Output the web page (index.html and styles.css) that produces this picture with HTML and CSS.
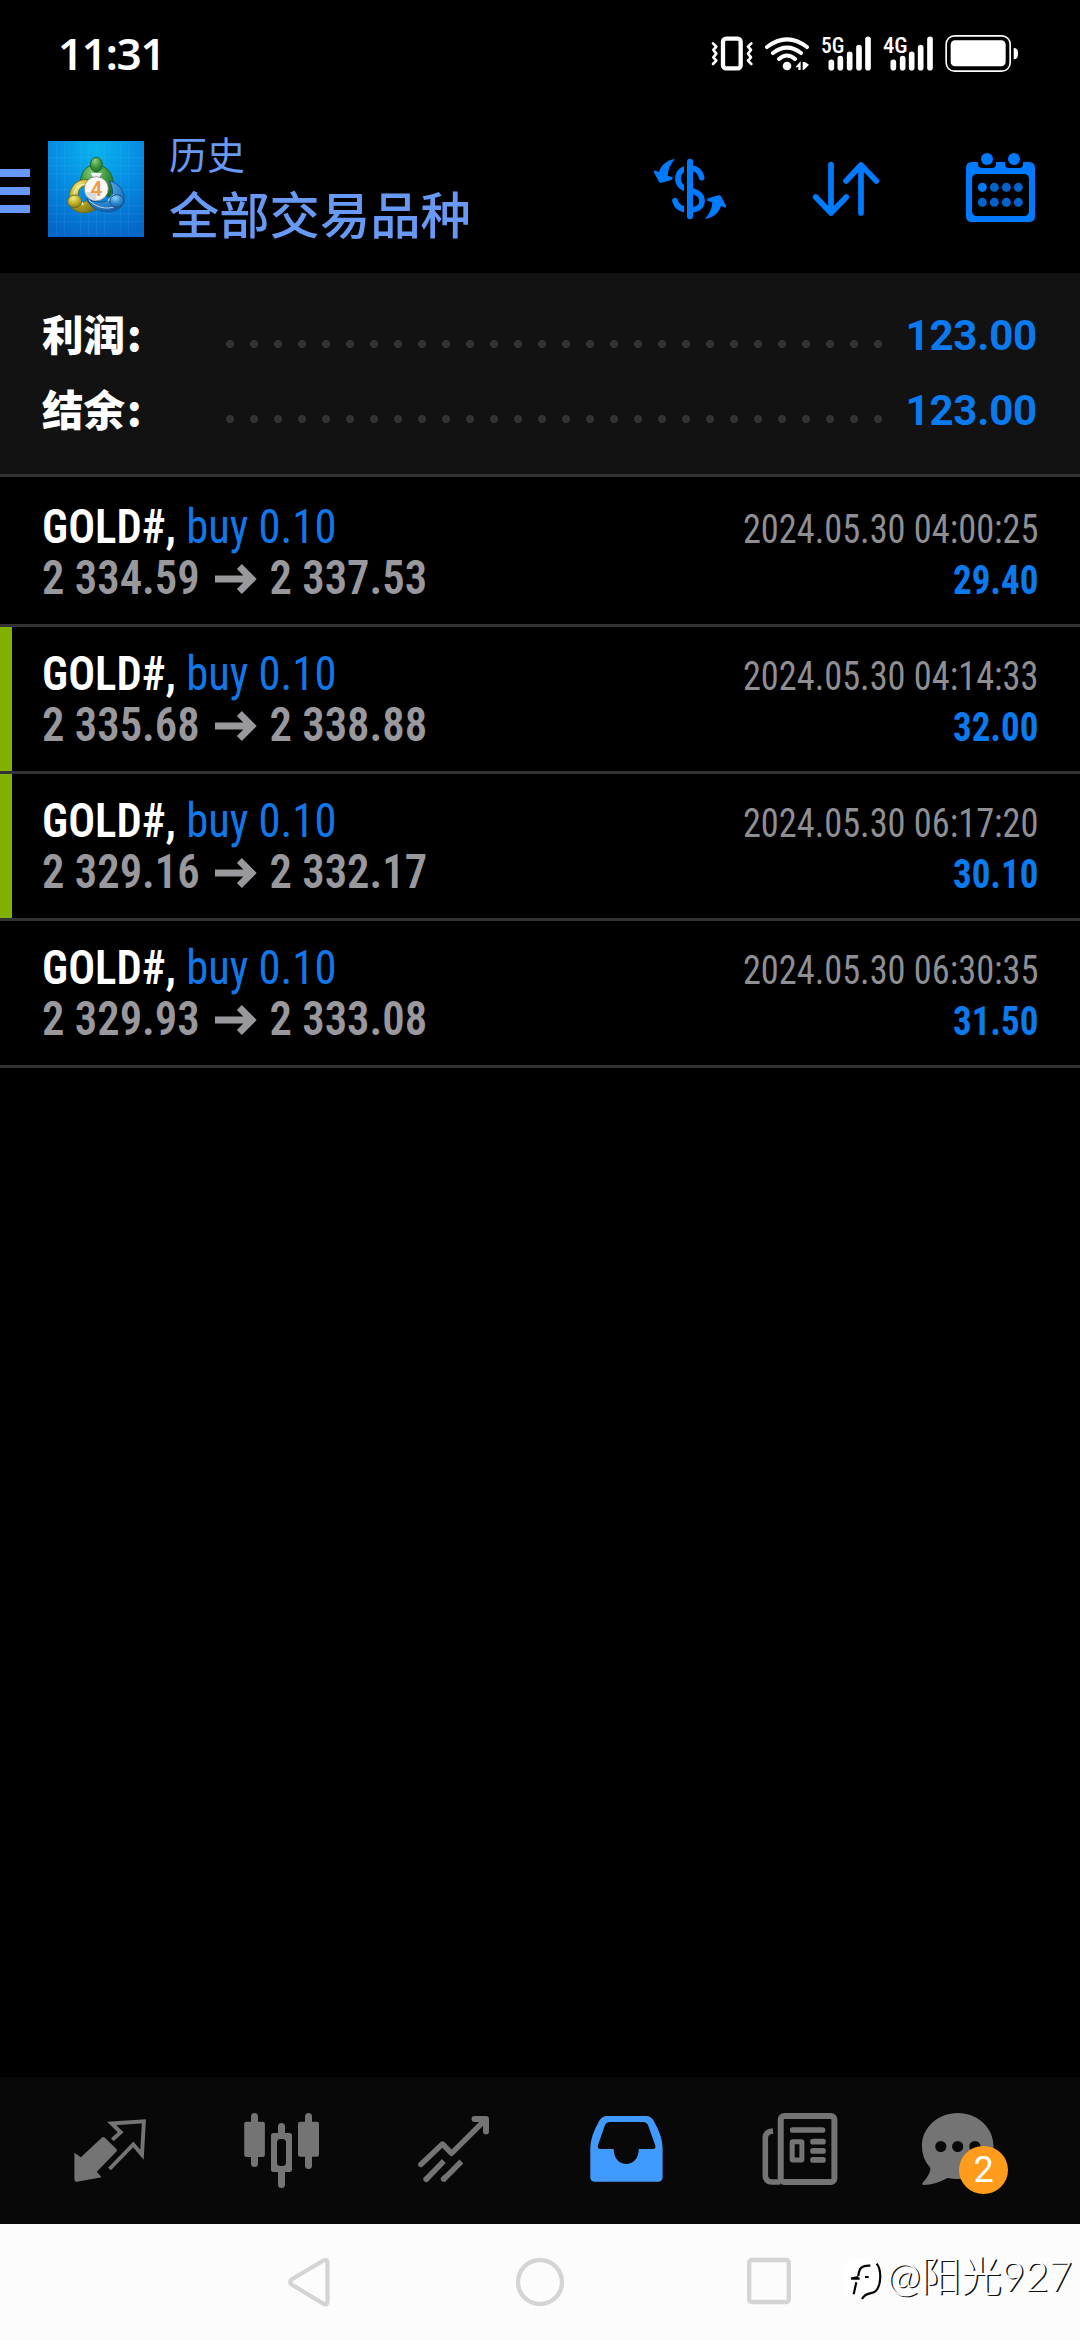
FILE: index.html
```
<!DOCTYPE html>
<html lang="zh-CN">
<head>
<meta charset="utf-8">
<title>历史</title>
<link rel="stylesheet" href="styles.css">
</head>
<body>
<div class="screen">
  <div class="status">
    <span class="clock">11:31</span>
    <svg class="status-icons" viewBox="90 60 930 140">
      <g fill="none" stroke="#fff" stroke-linecap="round" stroke-linejoin="round">
        <rect x="129" y="86" width="53" height="89" rx="9" stroke-width="13"/>
        <path d="M99 100l10 10-9 10 9 11-9 11 9 10-10 10M214 100l-10 10 9 10-9 11 9 11-9 10 10 10" stroke-width="8"/>
        <path d="M261 111Q321 65 381 111M279 129Q321 97 363 129M297 147Q321 126 345 147" stroke-width="12"/>
        <path d="M454 157v16M481 146v27M509 133v40M537 113v60M564 88v85M640 157v16M668 146v27M695 133v40M722 113v60M750 88v85" stroke-width="17"/>
        <rect x="798.500" y="77.500" width="192" height="106" rx="25" stroke-width="5"/>
      </g>
      <g fill="#fff">
        <circle cx="321" cy="168" r="13"/>
        <path d="M346 172l16-18v26h-7v-8zM368 156h7l12 8-13 14-6 3z"/>
        <rect x="812" y="91" width="165" height="78" rx="13"/>
        <path d="M1001 114c8 0 13 5 13 17s-5 17-13 17z"/>
        <text class="net" x="423" y="129" textLength="70" lengthAdjust="spacingAndGlyphs">5G</text>
        <text class="net" x="609" y="129" textLength="74" lengthAdjust="spacingAndGlyphs">4G</text>
      </g>
    </svg>
  </div>

  <header class="appbar">
    <div class="menu"><i></i><i></i><i></i></div>
    <svg class="logo" viewBox="0 0 288 288">
      <defs>
        <radialGradient id="sky" cx=".5" cy=".08" r=".95"><stop offset="0" stop-color="#08b4ee"/><stop offset=".45" stop-color="#0690e4"/><stop offset="1" stop-color="#0466c8"/></radialGradient>
        <radialGradient id="green" cx=".4" cy=".25" r=".8"><stop offset="0" stop-color="#8fce84"/><stop offset=".5" stop-color="#3f9a3c"/><stop offset="1" stop-color="#1c6a2b"/></radialGradient>
        <radialGradient id="gold" cx=".4" cy=".25" r=".8"><stop offset="0" stop-color="#f4ec86"/><stop offset=".5" stop-color="#c6b52b"/><stop offset="1" stop-color="#7f7715"/></radialGradient>
        <radialGradient id="blue" cx=".4" cy=".25" r=".8"><stop offset="0" stop-color="#90d2f7"/><stop offset=".5" stop-color="#3590d4"/><stop offset="1" stop-color="#115da6"/></radialGradient>
      </defs>
      <rect width="288" height="288" fill="url(#sky)"/>
      <path d="M26 0v288M50 0v288M98 0v288M122 0v288M146 0v288M170 0v288M218 0v288M242 0v288M0 50h288M0 74h288M0 98h288M0 146h288M0 194h288M0 218h288M0 242h288" stroke="#6cc6f5" stroke-opacity=".2" stroke-width="2"/>
      <g stroke-width="3">
        <path d="M144 70C112 72 94 98 97 136C108 120 117 116 126 116L144 98L160 112C168 124 170 140 164 160L184 168C204 138 202 78 144 70Z" fill="url(#green)" stroke="#1a6630"/>
        <path d="M118 116C80 112 56 150 66 190C76 218 116 222 140 206L116 180L98 186L90 166C90 144 98 134 118 134Z" fill="url(#gold)" stroke="#736d18"/>
        <path d="M184 120C214 124 236 156 226 188C212 216 160 222 130 194L116 174C140 184 166 188 180 176L194 162C194 144 192 134 184 120Z" fill="url(#blue)" stroke="#17528e"/>
        <path d="M122 176C140 198 176 208 202 196M112 130C92 130 78 144 78 164" fill="none" stroke="#f4fbff" stroke-opacity=".7"/>
        <path d="M128 96h34l-9 15h-17zM92 162l16 30-20-4zM198 158l-20 20 20 8z" fill="#e9f3f3"/>
        <ellipse cx="145" cy="71" rx="18" ry="22" fill="url(#green)" stroke="#1a6630"/>
        <ellipse cx="80" cy="181" rx="21" ry="19" fill="url(#gold)" stroke="#736d18"/>
        <ellipse cx="206" cy="180" rx="21" ry="19" fill="url(#blue)" stroke="#17528e"/>
      </g>
      <circle cx="145" cy="143" r="36" fill="#faf9f6" stroke="#777" stroke-width="2"/>
      <path d="M110 153h35v26a36 36 0 0 1-35-26z" fill="#d9d9d6"/>
      <text class="logo-num" x="145" y="165" text-anchor="middle">4</text>
    </svg>
    <div class="titles">
      <div class="title-small">历史</div>
      <div class="title-large">全部交易品种</div>
    </div>
    <div class="actions">
      <svg viewBox="90 60 240 240">
        <path d="M245 143C240 122 226 114 210 114C188 114 174 126 174 146C174 168 190 175 211 181C234 187 246 195 246 212C246 231 230 240 210 240C186 240 170 231 165 212" fill="none" stroke="#007aff" stroke-width="17" stroke-linecap="round"/>
        <path d="M196.500 85v185" stroke="#000" stroke-width="9"/>
        <path d="M210 95v164" stroke="#007aff" stroke-width="18" stroke-linecap="round"/>
        <g fill="#007aff"><path id="swing" d="M165 87C143 90 124 103 117 126L103 121C101 123 102 128 105 133L117 155C119 158 121 159 125 158L151 151C157 149 160 145 158 142L143 137C144 119 151 102 165 87Z"/><use href="#swing" transform="rotate(180 210 177)"/></g>
      </svg>
      <svg viewBox="555 60 240 240"><path d="M633 104v145M587 201l46 48 46-48M723 249V105M678 153l45-48 46 48" fill="none" stroke="#007aff" stroke-width="17" stroke-linecap="round" stroke-linejoin="round"/></svg>
      <svg viewBox="1020 60 240 240">
        <path fill="#007aff" fill-rule="evenodd" d="M1056 96h18v6q0 12 12 12h30q12 0 12-12v-6h27v6q0 12 12 12h30q12 0 12-12v-6h18q18 0 18 18v144q0 18-18 18h-171q-18 0-18-18v-144q0-18 18-18zM1072 132q-16 0-16 16v94q0 16 16 16h139q16 0 16-16v-94q0-16-16-16z"/>
        <g fill="#007aff"><circle cx="1101" cy="87" r="18"/><circle cx="1182" cy="87" r="18"/><circle cx="1087" cy="172" r="13.500"/></g>
        <g fill="#0463cb"><circle cx="1123" cy="172" r="13.500"/><circle cx="1159" cy="172" r="13.500"/><circle cx="1195" cy="172" r="13.500"/><circle cx="1087" cy="217" r="13.500"/><circle cx="1123" cy="217" r="13.500"/><circle cx="1159" cy="217" r="13.500"/><circle cx="1195" cy="217" r="13.500"/></g>
      </svg>
    </div>
  </header>

  <section class="summary">
    <div class="sum-row"><b class="sum-label">利润<span>:</span></b><i class="dots"></i><span class="sum-value">123.00</span></div>
    <div class="sum-row"><b class="sum-label">结余<span>:</span></b><i class="dots"></i><span class="sum-value">123.00</span></div>
  </section>

  <main class="deals">
    <article class="deal">
      <div class="line"><div class="lead"><span class="symbol">GOLD#,</span><span class="side">buy 0.10</span></div><time>2024.05.30 04:00:25</time></div>
      <div class="line"><div class="lead price">2 334.59<svg class="to" viewBox="0 0 43 30" preserveAspectRatio="none"><path d="M0 15h37M24.500 2.500l12.500 12.500-12.500 12.500"/></svg>2 337.53</div><span class="profit">29.40</span></div>
    </article>
    <article class="deal marked">
      <div class="line"><div class="lead"><span class="symbol">GOLD#,</span><span class="side">buy 0.10</span></div><time>2024.05.30 04:14:33</time></div>
      <div class="line"><div class="lead price">2 335.68<svg class="to" viewBox="0 0 43 30" preserveAspectRatio="none"><path d="M0 15h37M24.500 2.500l12.500 12.500-12.500 12.500"/></svg>2 338.88</div><span class="profit">32.00</span></div>
    </article>
    <article class="deal marked">
      <div class="line"><div class="lead"><span class="symbol">GOLD#,</span><span class="side">buy 0.10</span></div><time>2024.05.30 06:17:20</time></div>
      <div class="line"><div class="lead price">2 329.16<svg class="to" viewBox="0 0 43 30" preserveAspectRatio="none"><path d="M0 15h37M24.500 2.500l12.500 12.500-12.500 12.500"/></svg>2 332.17</div><span class="profit">30.10</span></div>
    </article>
    <article class="deal">
      <div class="line"><div class="lead"><span class="symbol">GOLD#,</span><span class="side">buy 0.10</span></div><time>2024.05.30 06:30:35</time></div>
      <div class="line"><div class="lead price">2 329.93<svg class="to" viewBox="0 0 43 30" preserveAspectRatio="none"><path d="M0 15h37M24.500 2.500l12.500 12.500-12.500 12.500"/></svg>2 333.08</div><span class="profit">31.50</span></div>
    </article>
  </main>

  <nav class="tabs">
    <svg viewBox="0 0 172 147"><path fill="#747474" d="M50.400 75.700L56.900 80.300L78 60.500Q79.300 59.300 80.600 60.500L92.400 72Q93.600 73.300 92.400 74.600L72.800 94.700L77.600 100.300L53 104.700Q50.400 105 50.400 102.500Z"/><path fill="none" stroke="#747474" stroke-width="3.900" d="M88.300 62.700L96.700 55.300L87.500 46.500L119.900 44.300L118 77.700L109.300 67.500L85.500 92"/></svg>
    <svg viewBox="0 0 172 147"><g fill="#747474"><rect x="48.200" y="44.700" width="20.700" height="35.300" rx="2"/><rect x="55" y="36" width="7" height="54" rx="3.500"/><rect x="102" y="44.700" width="21" height="35" rx="2"/><rect x="109" y="36" width="7" height="56" rx="3.500"/><path d="M82 56V49.500a3.500 3.500 0 0 1 7 0V56h4.500q2.500 0 2.500 2.500v34q0 2.500-2.500 2.500H89v12.500a3.500 3.500 0 0 1-7 0V95h-4.500q-2.500 0-2.500-2.500v-34q0-2.500 2.500-2.500zM84.500 62q-3.500 0-3.500 3.500v20q0 3.500 3.500 3.500h2q3.500 0 3.500-3.500v-20q0-3.500-3.500-3.500z" fill-rule="evenodd"/></g></svg>
    <svg viewBox="0 0 172 147"><g fill="none" stroke="#747474" stroke-width="5.400" stroke-linejoin="round"><path d="M52.800 87.500L74.500 67L83.500 76.300L117 43" stroke-linecap="round"/><path d="M106.500 42H118v12.500" stroke-width="6" stroke-linecap="round"/><path d="M75.900 84L57.500 103M93.400 84.500L75 103"/><path d="M60 100.500L58 102.300M77 100.500L75.500 102" stroke-linecap="round"/></g></svg>
    <svg viewBox="0 0 172 147"><path fill="#419bff" fill-rule="evenodd" d="M67 39h39q5 0 7.500 4.500Q122.600 59 122.600 71.300V100q0 4.700-4.700 4.700H55q-4.700 0-4.700-4.700V71.300Q50.300 59 59.500 43.500Q62 39 67 39ZM70 45Q66.500 45 65 48L58 68Q57 72 60.500 72H73.700C73.700 92 98.800 92 98.800 72H112.500Q116.300 72 115.300 68.500L108 48Q106.500 45 103 45Z"/></svg>
    <svg viewBox="0 0 172 147"><g fill="none" stroke="#747474" stroke-width="6"><rect x="68.700" y="39" width="53.700" height="66" rx="3.500"/><path d="M61 54Q53.300 54.500 53.300 61V98Q53.300 105 60 105H68" stroke-width="5.600"/><rect x="80.200" y="64.700" width="9.700" height="18.300" rx=".5" stroke-width="5"/><path d="M80.700 53h29.800M101 64.700h10M101 73.900h10M101 82.900h10" stroke-linecap="round" stroke-width="5.700"/></g></svg>
    <div class="tab-chat"><svg viewBox="0 0 172 147"><path fill="#747474" d="M73.700 36C93.500 36 109.500 50.500 109.500 69S93.500 102 73.700 102Q68.500 102 63.500 101Q52 107.500 40 108Q37.500 108 38.800 105.500Q46 98 46.500 91Q37.900 82 37.900 69C37.900 50.500 53.900 36 73.700 36Z"/><g fill="#080808"><circle cx="56.800" cy="69.500" r="5.600"/><circle cx="73.700" cy="69.500" r="5.600"/><circle cx="90.900" cy="69.500" r="5.600"/></g></svg><span class="badge">2</span></div>
  </nav>

  <footer class="sysnav">
    <svg viewBox="0 0 1080 116"><g fill="none" stroke="#d4d4d4" stroke-width="4.300" stroke-linejoin="round"><path d="M291.500 55.500Q289 58 291.500 60.500L323 79.500Q327.500 81.500 327.500 77.500V38.500Q327.500 35 323.500 36.500Z"/><circle cx="540" cy="58" r="22"/><rect x="749.200" y="36" width="39.600" height="42" rx="2.500"/></g></svg>
    <div class="watermark"><svg viewBox="0 0 120 140"><path fill="#fff" d="M0 60C0 20 20 8 55 8S112 25 112 65S90 115 60 122Q50 128 50 133L20 120Q0 100 0 60Z"/><path fill="none" stroke="#000" stroke-width="6.500" d="M101 26C116 45 116 92 97 109C84 119 68 110 57 132M82 32C59 30 48 37 46 63M24 71L46 66M26 71h24M40 82L32 118"/><path d="M66 63h11v6h-11z"/></svg><span>@阳光927</span></div>
  </footer>
</div>
</body>
</html>
```
FILE: styles.css
```
* { box-sizing: border-box; }
body { margin: 0; background: #000; }
svg { display: block; flex: none; }

.screen {
  width: 1080px;
  height: 2340px;
  display: flex;
  flex-direction: column;
  background: #000;
  overflow: hidden;
  font-family: "Roboto Condensed", Roboto, "Noto Sans CJK SC", sans-serif;
}

/* status bar */
.status {
  height: 105px;
  padding: 0 60px 0 58px;
  display: flex;
  justify-content: space-between;
  align-items: center;
}
.clock {
  font: 600 44px/60px "Noto Sans", sans-serif;
  letter-spacing: -1.300px;
  color: #fff;
}
.status-icons { width: 310px; height: 46.700px; margin-top: 2px; }
.net { font: 500 66px "Roboto Condensed", Roboto, sans-serif; }

/* app bar */
.appbar {
  height: 168px;
  padding: 0 40px 0 0;
  display: flex;
  align-items: center;
}
.menu { width: 30px; display: flex; flex-direction: column; gap: 10px; padding-top: 4px; }
.menu i { height: 8px; background: #6799fa; }
.logo { width: 96px; height: 96px; margin-left: 18px; }
.logo-num { font: 600 62px Roboto, sans-serif; fill: #f29a4a; }
.titles {
  flex: 1;
  margin-left: 25px;
  padding-bottom: 12px;
  color: #6799f5;
  font-family: "Noto Sans CJK SC", sans-serif;
  font-weight: 500;
}
.title-small { font-size: 38px; line-height: 58px; font-weight: 400; }
.title-large { font-size: 50.300px; line-height: 60px; }
.actions { display: flex; gap: 75px; padding-top: 2px; }
.actions svg { width: 80px; height: 80px; }

/* totals */
.summary {
  height: 204px;
  padding: 25px 43px 0 42px;
  background: #121212;
  border-bottom: 3px solid #333;
}
.sum-row { height: 75px; display: flex; align-items: center; }
.sum-label {
  width: 176px;
  padding-bottom: 6px;
  color: #fff;
  font: 900 41.500px/60px "Noto Sans CJK SC", sans-serif;
}
.sum-label span { margin-left: 2px; }
.dots {
  width: 672px;
  height: 8px;
  margin-top: 16px;
  background: radial-gradient(circle at 12px 4px, #333 3.600px, transparent 4.400px) 0 0 / 24px 8px;
}
.sum-value {
  flex: 1;
  text-align: right;
  color: #0a7aee;
  font: 700 42px/60px Roboto, sans-serif;
  letter-spacing: -.200px;
}

/* deals */
.deals { flex: 1; padding-top: 3px; }
.deal {
  height: 147px;
  padding: 22px 42px 0 42px;
  border-bottom: 3px solid #333;
}
.deal.marked { box-shadow: inset 12px 0 #81b000; }
.line {
  height: 50.500px;
  display: flex;
  justify-content: space-between;
  align-items: baseline;
  font-size: 48px;
  line-height: 50px;
  white-space: pre;
}
.lead {
  display: flex;
  align-items: baseline;
  transform: scaleX(.93);
  transform-origin: left;
}
.symbol { color: #fff; font-weight: 600; }
.side { margin-left: 11px; color: #1278ea; }
.price { color: #98989d; font-weight: 600; }
.to { width: 46px; height: 30px; margin: 0 13px 2px 16px; fill: none; stroke: #98989d; stroke-width: 7px; }
.line time { color: #8e8e93; font-size: 40px; transform: scaleX(.908); transform-origin: right; }
.profit { color: #0a7aee; font-size: 40px; font-weight: 700; transform: scaleX(.925); transform-origin: right; }

/* bottom tabs */
.tabs {
  height: 147px;
  padding: 0 24px;
  display: flex;
  background: #080808;
}
.tabs svg { width: 172px; height: 147px; }
.tab-chat { position: relative; }
.badge {
  position: absolute;
  left: 75px;
  top: 69px;
  width: 49px;
  height: 48px;
  border-radius: 50%;
  background: #ff9c1c;
  color: #fff;
  font: 400 36px/49px Roboto, sans-serif;
  text-align: center;
}

/* system navigation */
.sysnav { position: relative; height: 116px; background: #fcfcfc; }
.sysnav > svg { width: 1080px; height: 116px; }
.watermark {
  position: absolute;
  right: 8px;
  top: 27px;
  display: flex;
  align-items: center;
  color: #fff;
  font: 300 40.500px/50px Lato, "Noto Sans CJK SC", sans-serif;
  text-shadow: 1.500px 1px 0 #111;
}
.watermark svg { width: 40px; height: 46.700px; margin: 4px 4px 0 0; }
```
